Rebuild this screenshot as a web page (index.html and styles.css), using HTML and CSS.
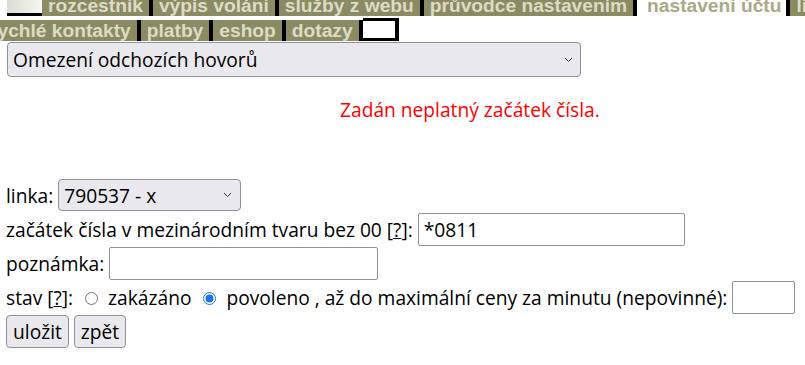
FILE: index.html
```html
<!DOCTYPE html>
<html lang="cs">
<head>
<meta charset="utf-8">
<title>nastavení účtu</title>
<link rel="stylesheet" href="styles.css">
</head>
<body>
<div class="nav">
  <div class="row row1">
    <span class="logo"></span>
    <a class="tab" href="#">rozcestník</a>
    <a class="tab" href="#">výpis volání</a>
    <a class="tab" href="#">služby z webu</a>
    <a class="tab" href="#">průvodce nastavením</a>
    <a class="tab active" href="#">nastavení účtu</a>
    <a class="tab" href="#">linky</a>
  </div>
  <div class="row row2">
    <a class="tab" href="#">rychlé kontakty</a>
    <a class="tab" href="#">platby</a>
    <a class="tab" href="#">eshop</a>
    <a class="tab" href="#">dotazy</a>
    <span class="blank"></span>
  </div>
</div>
<form class="content">
  <select class="sel main-select">
    <option>Omezení odchozích hovorů</option>
  </select>
  <p class="error">Zadán neplatný začátek čísla.</p>
  <div class="fields">
    <div class="line">linka: <select class="sel line-select"><option>790537 - x</option></select></div>
    <div class="line">začátek čísla v mezinárodním tvaru bez 00 [<a class="help" href="#">?</a>]: <input class="txt in-prefix" type="text" value="*0811"></div>
    <div class="line">poznámka: <input class="txt in-note" type="text"></div>
    <div class="line">stav [<a class="help" href="#">?</a>]: <input class="radio" type="radio" name="stav"> zakázáno <input class="radio" type="radio" name="stav" checked> povoleno , až do maximální ceny za minutu (nepovinné): <input class="txt in-price" type="text"></div>
    <div class="line"><button type="button" class="btn">uložit</button><button type="button" class="btn btn2">zpět</button></div>
  </div>
</form>
</body>
</html>
```

FILE: styles.css
```css
html, body {
  margin: 0;
  padding: 0;
  background: #fff;
  overflow: hidden;
}
body {
  font-family: "Open Sans", "Noto Sans", sans-serif;
  font-size: 19.2px;
  color: #000;
}
.nav {
  font-family: "Liberation Sans", Arial, sans-serif;
  font-weight: bold;
  font-size: 19.2px;
  white-space: nowrap;
  overflow: hidden;
}
.row {
  display: flex;
  align-items: flex-start;
}
.row1 {
  margin-top: -5px;
  padding-left: 7px;
}
.row2 {
  margin-top: 4px;
  margin-left: -16px;
}
.tab {
  display: block;
  height: 21px;
  line-height: 21px;
  padding: 0 6px;
  background: #8b8b63;
  color: #dcdcc6;
  text-decoration: none;
  border-right: 4px solid #000;
  flex-shrink: 0;
}
.tab.active {
  background: #fff;
  color: #a9a987;
  padding: 0 5px 0 10px;
}
.logo {
  display: block;
  width: 35px;
  height: 18px;
  background: linear-gradient(to right, #dcdcd2, #f6f6f2);
  border-bottom: 3px solid #000;
  flex-shrink: 0;
}
.blank {
  display: block;
  width: 32px;
  height: 17px;
  margin-top: -2px;
  background: #fff;
  border-top: 3px solid #000;
  border-bottom: 3px solid #000;
  border-right: 4px solid #000;
  flex-shrink: 0;
}
.content {
  padding-left: 6px;
  padding-top: 1px;
}
.sel {
  -webkit-appearance: none;
  appearance: none;
  font-family: inherit;
  font-size: 19.2px;
  color: #000;
  background-color: #e9e9ed;
  background-image: url("data:image/svg+xml;utf8,<svg xmlns='http://www.w3.org/2000/svg' width='9' height='6' viewBox='0 0 9 6'><path d='M1 1 L4.5 4.5 L8 1' fill='none' stroke='%23333' stroke-width='1'/></svg>");
  background-repeat: no-repeat;
  border: 1px solid #8f8f9d;
  border-radius: 4px;
  box-sizing: border-box;
  padding: 0 20px 0 5px;
  margin: 0;
}
.main-select {
  width: 574px;
  height: 35px;
  margin-left: 1px;
  background-position: right 7px center;
}
.error {
  color: #f00;
  margin: 20px 0 0 334px;
  line-height: 25px;
}
.fields {
  margin-top: 56px;
}
.line {
  height: 34px;
  display: flex;
  align-items: center;
  white-space: pre;
}
.line-select {
  width: 183px;
  height: 32px;
  background-position: right 8px center;
}
.txt {
  -webkit-appearance: none;
  appearance: none;
  font-family: inherit;
  font-size: 19.2px;
  height: 33px;
  box-sizing: border-box;
  margin: 0;
  padding: 1px 5px;
  border: 1px solid #8f8f9d;
  border-radius: 2px;
  background: #fff;
  color: #000;
}
.in-prefix { width: 267px; }
.in-note { width: 269px; }
.in-price { width: 63px; }
.radio {
  margin: 3px 5px 0 7px;
  width: 13px;
  height: 13px;
  accent-color: #1a73e8;
}
.help {
  color: #000;
  text-decoration: underline;
}
.btn {
  -webkit-appearance: none;
  appearance: none;
  font-family: inherit;
  font-size: 19.2px;
  color: #000;
  height: 33px;
  width: 63px;
  margin: 0;
  padding: 0;
  text-align: center;
  background: #e9e9ed;
  border: 1px solid #8f8f9d;
  border-radius: 4px;
}
.btn2 {
  margin-left: 5px;
  width: 52px;
}
```
